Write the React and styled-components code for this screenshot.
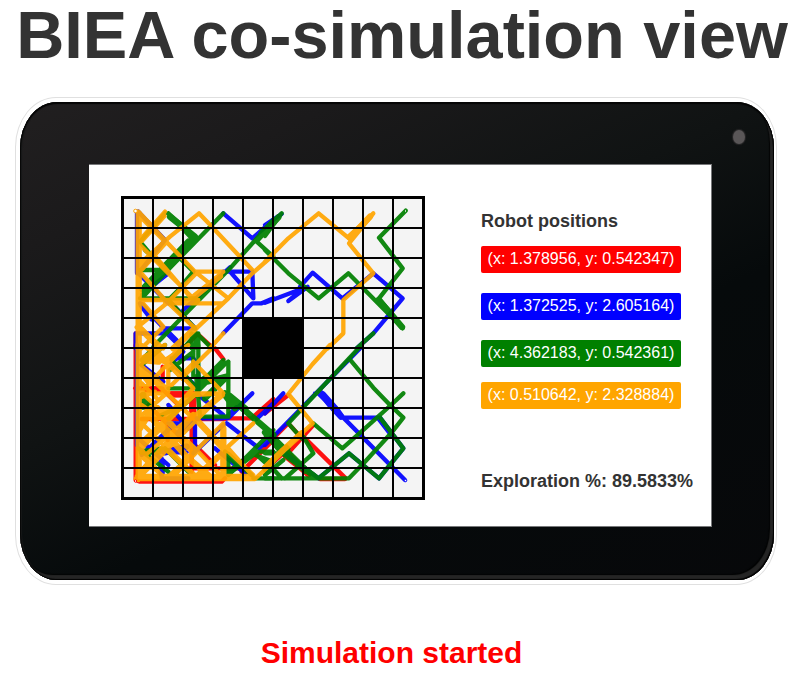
import React from "react";
import styled, { createGlobalStyle } from "styled-components";

const GlobalStyle = createGlobalStyle`
  * { box-sizing: border-box; }
  body {
    margin: 0;
    background: #fff;
    color: #333;
    font-family: "Liberation Sans", Arial, sans-serif;
  }
`;

const Page = styled.main`
  width: 806px;
  height: 687px;
  display: flex;
  flex-direction: column;
`;

const Title = styled.h1`
  margin: 0 0 17px;
  width: 804px;
  height: 80px;
  text-align: center;
  font-size: 66.67px;
  line-height: 70px;
  font-weight: bold;
  white-space: nowrap;
`;

const TabletRim = styled.section`
  width: 762px;
  height: 488px;
  margin-left: 15px;
  padding: 4px 3px 4px 4px;
  border: 1px solid #e0e0e0;
  border-radius: 41px / 50px;
  flex: none;
`;

const TabletBody = styled.div`
  position: relative;
  width: 754px;
  height: 478px;
  padding: 62px 0 0 69px;
  border-radius: 37px / 46px;
  background: linear-gradient(155deg, #211f20 0%, #1b1a1b 18%, #101313 42%, #060a0b 62%, #07080a 100%);
  box-shadow: inset 0 2px 1px #050505, inset -1px -1px 1px #000, inset 1px 0 1px #080808,
    inset -4px -5px 1px #252525, inset -5px -6px 1px #020303, inset 2px 0 1px #191b1b;
`;

const Camera = styled.span`
  position: absolute;
  top: 28px;
  right: 29px;
  width: 12px;
  height: 14px;
  border-radius: 50%;
  background: #595657;
  box-shadow: 0 0 1px 1px #292829;
`;

const Screen = styled.div`
  width: 623px;
  height: 363px;
  padding: 32px 0 0 32px;
  display: flex;
  background: #fff;
  border: 1px solid #77787a;
  border-width: 1px 1px 1px 0;
`;

const Map = styled.svg`
  display: block;
  flex: none;
  width: 304px;
  height: 304px;
  margin-top: -1px;
`;

const Info = styled.div`
  display: flex;
  flex-direction: column;
  margin-left: 56px;
`;

const Label = styled.h2`
  margin: ${(p) => p.$top}px 0 0;
  font-size: 18px;
  line-height: 20px;
  font-weight: bold;
  white-space: nowrap;
`;

const Position = styled.div`
  width: 200px;
  height: 27px;
  margin-top: ${(p) => p.$gap}px;
  border-radius: 2px;
  background: ${(p) => p.$color};
  color: #fff;
  font-size: 16px;
  line-height: 25px;
  text-align: center;
  white-space: nowrap;
`;

const Status = styled.p`
  margin: 50px 0 0;
  width: 783px;
  color: #f00;
  text-align: center;
  font-size: 30px;
  line-height: 36px;
  font-weight: bold;
`;

const robots = [
  { color: "red", x: "1.378956", y: "0.542347", gap: 15 },
  { color: "blue", x: "1.372525", y: "2.605164", gap: 20 },
  { color: "green", x: "4.362183", y: "0.542361", gap: 20 },
  { color: "orange", x: "0.510642", y: "2.328884", gap: 15 },
];

// Origin of each map sector; trace points are in thirds of a pixel.
const sectors = {
  nw: [115, 190],
  ne: [265, 190],
  sw: [115, 345],
  se: [265, 345],
};

// "heavy" holds the stretches a robot has driven several times.
const traces = [
  {
    color: "red",
    nw: "M62 430V475M205 475L248 432L295 475",
    sw: "M62 0V405L75 410H320L330 400M300 10L325 42M60 130H135M143 65V110M150 140L200 190M160 145H235M160 150H230V380M238 150V300M158 240V285M330 220H410L475 162M245 305L300 360M100 180L205 285M80 222H330M475 285L380 380M210 370H380",
    se: "M0 205L70 150M70 235L0 305M70 235L100 268M145 240L60 335L130 390M115 275L240 398M165 402H240M0 375L60 320",
    heavy: {
      sw: "M95 133H140M165 148H235M232 150V200",
      se: "M60 318L130 388",
    },
  },
  {
    color: "blue",
    nw: "M66 65V250M62 475V430H160M70 65L150 150L70 250L160 340L70 250M75 340L200 470M140 415H240L160 330M325 70L412 145L475 90M325 245H412L415 325L345 245M205 360L345 232M325 430L412 340H440L475 325M110 290L160 250",
    ne: "M0 105L50 72M0 338L115 295L70 333L128 290M105 290L143 248L232 325L325 250L413 325L325 430L275 475",
    sw: "M66 0V300M170 40H235L250 65V150L325 210M412 145L335 220M335 235L432 310L475 272M245 220H325M160 235H240V320M140 320L215 305L170 322H215M140 340V400H220M180 235L80 330M70 280L160 360M160 180L220 250M300 310L390 385M170 55L205 20M180 65L250 130M425 222L475 175M325 240L235 325M80 60L145 110",
    se: "M55 145L0 205M0 300L50 250L290 5M150 145L175 145L215 190L235 218H338L378 270M160 145L235 218L420 405M345 218L415 310L342 400L252 325L160 400L60 325",
    heavy: {
      nw: "M80 345L110 385M155 425L195 465",
      sw: "M170 240H215L190 265M150 322L215 305M140 350V385M340 215L365 190",
      se: "M168 145L200 185L228 215",
    },
  },
  {
    color: "green",
    nw: "M160 70L245 145L205 180M160 70L235 150L195 190M150 70L75 155L113 200M325 70L80 320M245 145L80 300M75 240H150M195 205L235 245L205 280M75 325H250L235 325M475 90L345 235L115 470M475 100L425 155L475 200M90 180L160 240M160 330L240 415M230 430V475M250 430V475M205 475L245 430L290 475M160 330L200 290",
    ne: "M0 120L50 70L0 138M0 180L70 250L161 325L250 250L413 415M422 62L342 143L413 235L342 325L413 413M325 430L275 475",
    sw: "M235 0V95M250 0V130M340 50V215H255L245 100M340 50L250 110M260 110L325 45M200 10L170 45L245 130M160 130H235M165 75L235 20M330 145L475 270M340 145L395 190M80 60L150 0M70 310L160 380M80 320L140 310M80 150L115 190M140 210L205 180M240 150L160 220M325 60L245 130M330 320L410 390M340 390V330M340 385L420 320H475M420 325L475 375M415 400H475M340 390L475 255M420 330L475 350M80 45L110 15M150 310L220 380",
    se: "M0 325H45L70 310M115 275L145 325L60 400M145 235L232 310L300 250L378 180L415 145M0 250L60 310L150 398M0 265L120 380M290 0L70 235L110 280M0 400H252L300 350L378 265L415 218L375 180L325 128L252 40M0 345L50 400M0 390L55 345M345 218L415 310L342 400L252 325L160 400L60 325M0 375L65 305",
    heavy: {
      nw: "M165 80L240 140L215 165M235 150L85 315M220 155L90 290M150 235L90 305M440 130L475 98M245 435V470",
      ne: "M0 125L40 82M340 330L378 372L411 411",
      sw: "M248 95V135L325 58M255 115L335 95L270 160M330 145L475 270M330 150L360 190M80 320H130M340 330L365 355M345 380L410 330M85 150V185L105 185",
      se: "M0 262L50 320L150 395",
    },
  },
  {
    color: "orange",
    nw: "M70 65V475M70 65L152 153L240 245H325L234 325L70 160L147 70M75 150L150 65M70 225L165 140L252 70L300 120L412 240M75 240L155 155M150 155L115 120M113 190L225 320M240 245L340 325M475 195L412 250L340 325L180 475M150 340H325M70 330H250M70 240L150 330L240 415M155 340L244 250M65 412L75 405L155 340M75 330L145 410L80 475M70 410L145 475M75 410L135 475M325 430L285 475",
    ne: "M0 215L70 145L161 70L252 145L325 70L252 160L325 250L235 330V430L188 475M250 140L310 85",
    sw: "M70 0V405M62 402H420L475 350M78 395H415M80 0L150 45L220 0M70 45L150 0M75 60L155 130M75 60L115 30L160 50L235 130L150 220H75M75 70L235 220M80 140L160 55V130M85 145H155M160 55L205 10M235 50L325 145L235 150L80 310M325 145H240M75 140L155 210M80 180L160 235L240 310L325 400M70 220L160 140M80 235L240 390M235 55L170 120M325 145L80 390M70 310L145 240L235 325L325 235V395M75 380L230 220M75 330L145 395M85 335L235 210M160 320L245 400M240 220L330 310L415 390M415 235L235 400M330 320L245 400M240 320L160 395M295 5L200 100L120 10M70 300L155 220M75 310L130 380M340 310L415 395M170 235L240 320M80 115L125 160M70 160L120 140",
    se: "M195 0L143 57L70 147L143 235L55 315L0 370",
    heavy: {
      nw: "M71 70V475M80 150L145 78M80 235L148 158M240 415L175 475M80 420L135 475M75 75L110 110M240 318L315 258",
      ne: "M255 143L315 80",
      sw: "M71 0V395M68 396H400M125 40L155 50L195 15M160 55L205 100M235 210L115 340L72 390M75 310L110 365M115 225L215 335L285 395M240 215L320 150M80 45L130 50M75 75L105 115M100 205L180 200L235 150M240 322L170 395M325 250V385M75 250L100 210M245 225L320 305",
      se: "M110 265L55 315L0 368",
    },
  },
];

const gridLines = [153, 183, 213, 243, 273, 303, 333, 363, 393];

function SectorPaths({ paths, width }) {
  return Object.entries(sectors).map(([name, [x, y]]) =>
    paths[name] ? (
      <path
        key={name}
        strokeWidth={width}
        transform={`translate(${x} ${y}) scale(.33333)`}
        d={paths[name]}
      />
    ) : null
  );
}

function ExplorationMap() {
  return (
    <Map viewBox="121 196 304 304">
      <rect x="121" y="196" width="304" height="304" fill="#f4f4f4" />
      {traces.map((trace) => (
        <g
          key={trace.color}
          fill="none"
          stroke={trace.color}
          strokeLinejoin="round"
          strokeLinecap="round"
          opacity="0.93"
        >
          <SectorPaths paths={trace} width={13} />
          <SectorPaths paths={trace.heavy} width={19} />
        </g>
      ))}
      <g fill="#fff" strokeWidth="1">
        <circle cx="135.5" cy="211" r="1.8" stroke="orange" />
        <circle cx="405.5" cy="211" r="1.2" stroke="green" />
        <circle cx="405.5" cy="480.5" r="1.2" stroke="blue" />
        <circle cx="135.5" cy="481" r="1.2" stroke="red" />
      </g>
      <g stroke="#000" strokeWidth="2">
        {gridLines.map((x) => (
          <path key={x} d={`M${x} 197V499M122 ${x + 75}H424`} />
        ))}
      </g>
      <rect x="242" y="317" width="62" height="62" />
      <rect x="122.5" y="197.5" width="301" height="301" fill="none" stroke="#000" strokeWidth="3" />
    </Map>
  );
}

export default function App() {
  return (
    <>
      <GlobalStyle />
      <Page>
        <Title>BIEA co-simulation view</Title>
        <TabletRim>
          <TabletBody>
            <Camera />
            <Screen>
              <ExplorationMap />
              <Info>
                <Label $top={14}>Robot positions</Label>
                {robots.map((r) => (
                  <Position key={r.color} $color={r.color} $gap={r.gap}>
                    (x: {r.x}, y: {r.y})
                  </Position>
                ))}
                <Label $top={62}>Exploration %: 89.5833%</Label>
              </Info>
            </Screen>
          </TabletBody>
        </TabletRim>
        <Status>Simulation started</Status>
      </Page>
    </>
  );
}
